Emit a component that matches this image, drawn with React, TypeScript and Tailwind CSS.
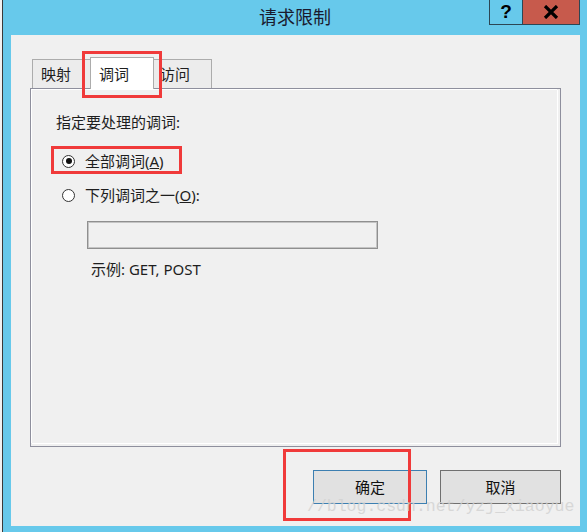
import React from "react";

const font = "font-['Noto_Sans','Noto_Sans_CJK_SC',sans-serif]";

const Radio = ({ checked, label }: { checked?: boolean; label: React.ReactNode }) => (
  <div className="flex items-center h-[20px]">
    <span className="ml-[6px] w-[13px] h-[13px] rounded-full border border-[#333] bg-white flex items-center justify-center">
      {checked && <span className="w-[6px] h-[6px] rounded-full bg-[#111]" />}
    </span>
    <span className="ml-[10px] text-[15px] leading-[20px] text-[#1e1e1e]">{label}</span>
  </div>
);

export default function App() {
  return (
    <div className={`relative w-[587px] h-[532px] flex bg-white overflow-hidden ${font}`}>
      {/* strip of whatever sits behind the dialog */}
      <div className="w-[2px] bg-[#f2f2f2]" />
      <div className="w-[1px] bg-[#3a3a3a]" />

      {/* window frame */}
      <div className="flex-1 flex flex-col bg-[#67c9eb] pl-[8px] pr-[7px] pb-[6px]">
        <div className="h-[35px] flex items-start">
          <div className="ml-[248px] mt-[5px] text-[18px] leading-[24px] text-[#1a1a2e]">请求限制</div>
          <div className="ml-auto flex h-[25px] border-x border-b border-[#2c4654]">
            <div className="w-[33px] flex items-center justify-center text-[19px] font-bold text-black border-r border-[#2c4654] font-['Liberation_Sans',sans-serif]">
              ?
            </div>
            <div className="w-[56px] flex items-center justify-center bg-[#c75a4c]">
              <svg width="16" height="14" viewBox="0 0 16 14">
                <path d="M2 1 L14 13 M14 1 L2 13" stroke="#000" strokeWidth="3.2" />
              </svg>
            </div>
          </div>
        </div>

        {/* client area */}
        <div className="flex-1 flex flex-col bg-[#f0f0f0] px-[19px]">
          {/* tabs */}
          <div className="mt-[22px] h-[32px] -mb-[1px] flex items-end pl-[2px] relative z-10">
            <div className="w-[58px] h-[29px] mb-[1px] border-l border-t border-[#acacac] bg-[#ececec] pl-[8px] text-[15px] leading-[29px] text-[#1e1e1e]">
              映射
            </div>
            <div className="w-[64px] h-[32px] border-x border-t border-[#acacac] bg-white pl-[8px] pt-[4px] text-[15px] leading-[24px] text-[#1e1e1e]">
              调词
            </div>
            <div className="w-[58px] h-[29px] mb-[1px] border-r border-t border-[#acacac] bg-[#ececec] pl-[6px] text-[15px] leading-[29px] text-[#1e1e1e]">
              访问
            </div>
          </div>

          {/* tab page */}
          <div className="h-[359px] border border-[#8e8f9d] flex">
            <div className="flex-1 flex flex-col border-l border-t border-white mr-[3px] mb-[3px] shadow-[1px_1px_0_#fff] pl-[24px]">
              <div className="mt-[22px] text-[15px] leading-[20px] text-[#1e1e1e]">指定要处理的调词:</div>
              <div className="mt-[19px]">
                <Radio
                  checked
                  label={
                    <>
                      全部调词(<span className="underline">A</span>)
                    </>
                  }
                />
              </div>
              <div className="mt-[14px]">
                <Radio
                  label={
                    <>
                      下列调词之一(<span className="underline">O</span>):
                    </>
                  }
                />
              </div>
              <div className="mt-[16px] ml-[31px] w-[291px] h-[28px] border border-[#8f8f8f] shadow-[inset_0_0_0_1px_#c4c4c4] bg-[#f0f0f0]" />
              <div className="mt-[10px] ml-[35px] text-[15px] leading-[20px] text-[#1e1e1e]">示例: GET, POST</div>
            </div>
          </div>

          {/* buttons */}
          <div className="mt-[23px] flex justify-end gap-[13px]">
            <button className="w-[114px] h-[34px] border border-[#3c7fb1] bg-[#e1e1e1] text-[15px] text-[#111]">确定</button>
            <button className="w-[121px] h-[34px] border border-[#707070] bg-[#e1e1e1] text-[15px] text-[#111]">取消</button>
          </div>
        </div>
      </div>

      {/* annotation boxes */}
      <div className="absolute left-[82px] top-[51px] w-[80px] h-[47px] border-[3px] border-[#f03a3a] z-20" />
      <div className="absolute left-[51px] top-[146px] w-[131px] h-[28px] border-[3px] border-[#f03a3a] z-20" />
      <div className="absolute left-[283px] top-[449px] w-[128px] h-[72px] border-[3px] border-[#f03a3a] z-20" />

      {/* watermark */}
      <div className="absolute left-[307px] top-[497px] text-[16.5px] leading-[20px] text-[#d2d2d2] opacity-80 font-['Liberation_Mono',monospace] whitespace-nowrap z-30">
        //blog.csdn.net/yzj_xiaoyue
      </div>
    </div>
  );
}
